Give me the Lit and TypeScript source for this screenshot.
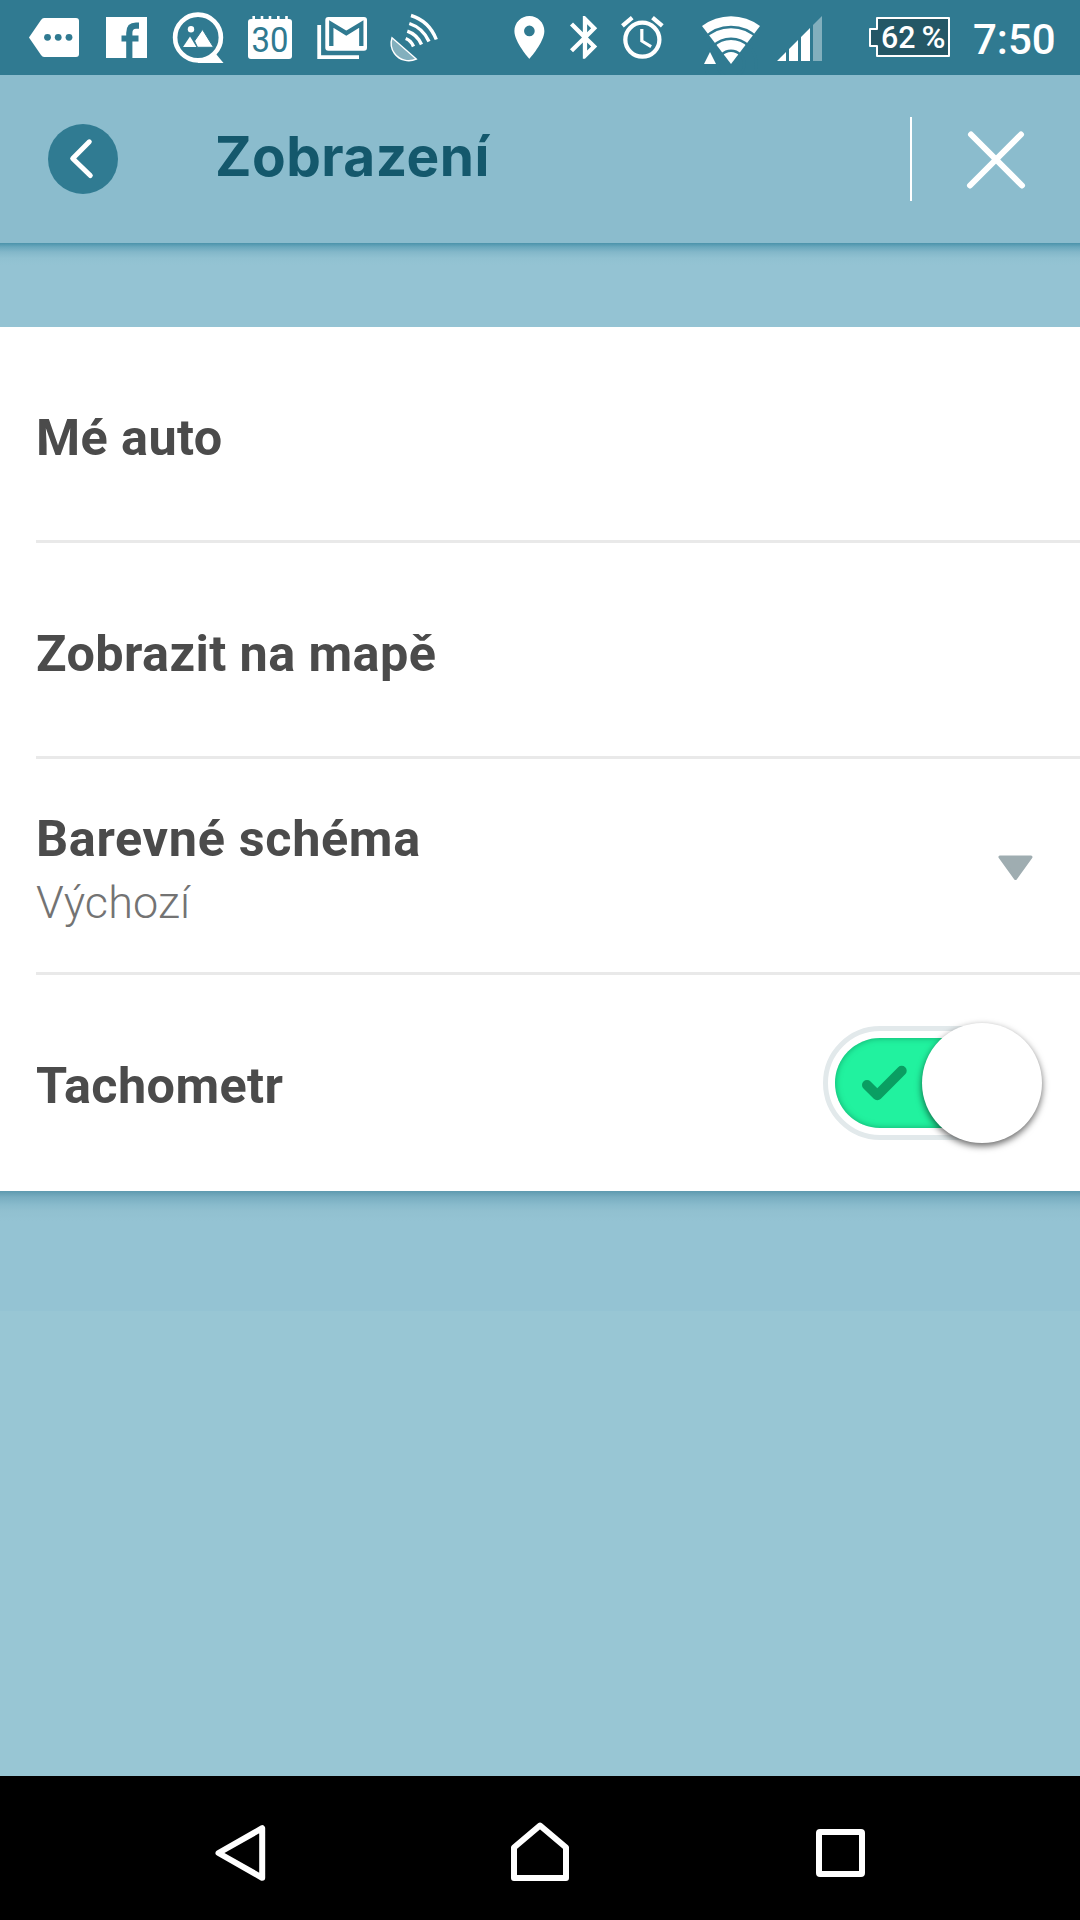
import { LitElement, html, css, svg, nothing } from "lit";
import { customElement, property } from "lit/decorators.js";

const TEAL = "#307a91";

/* Status icons: each slot spans [x, x + w] of the bar, slots are laid side by side. */
const leftIcons = [
  {
    x: 0, w: 92,
    art: svg`<path fill="#fff" d="M29 37.500 41 20Q42.400 18 44 18H76Q79 18 79 21V54Q79 57 76 57H44Q42.400 57 41 55Z"/>
      <g fill=${TEAL}><circle cx="47.500" cy="37.300" r="3.400"/><circle cx="58.200" cy="37.300" r="3.400"/><circle cx="69" cy="37.300" r="3.400"/></g>`,
  },
  {
    x: 92, w: 70,
    art: svg`<rect x="106" y="17" width="41" height="41" fill="#fff"/>
      <path fill="none" stroke=${TEAL} stroke-width="6.200" d="M129.300 58V33Q129.300 25.700 136 25.700H139M121.500 38.500H138.500"/>`,
  },
  {
    x: 162, w: 72,
    art: svg`<path fill="#fff" d="M198 57.500V63H223.500L216 54Z"/>
      <circle cx="198" cy="37.500" r="22.900" fill=${TEAL} stroke="#fff" stroke-width="4.600"/>
      <circle cx="191" cy="29.300" r="3.200" fill="#fff"/>
      <path fill="#fff" d="M183 47 190 36.500 196.500 47Z"/>
      <path fill="#fff" stroke=${TEAL} stroke-width="1" d="M194.500 41 202.500 29.500 213.500 47.300H197.500Z"/>`,
  },
  {
    x: 234, w: 72,
    art: svg`<rect x="248" y="19" width="44" height="40" rx="3" fill="#fff"/>
      <path stroke="#fff" stroke-width="2.600" d="M253.700 16V21M262 16V21M270 16V21M278.300 16V21M286.500 16V21"/>
      <text x="251.500" y="52" font-family="Roboto, sans-serif" font-size="35.500" font-weight="400" fill=${TEAL} textLength="37" lengthAdjust="spacingAndGlyphs">30</text>`,
  },
  {
    x: 306, w: 74,
    art: svg`<path fill="none" stroke="#fff" stroke-width="3.800" d="M319.200 25V57.100H359"/>
      <rect x="325.300" y="17" width="41.700" height="33.700" rx="3" fill="#fff"/>
      <path fill="none" stroke=${TEAL} stroke-width="4.300" d="M331.300 46V24L346.300 33.200 361.300 24V46"/>`,
  },
  {
    x: 380, w: 70,
    art: svg`<path fill="#fff" fill-opacity=".4" stroke="#fff" stroke-width="1.400" d="M392 37.700 416.300 59C409 62.500 399.500 60.500 394.500 53.500 390.500 48 390.500 42.500 392 37.700Z"/>
      <path fill="none" stroke="#fff" stroke-width="3.400" d="M411 15.500Q429 21 436.300 39.500M409.300 23.500Q423 28 429 41.500M407.300 31.200Q417 34.500 421.500 44.500M405.700 38.500Q411 40.500 413.500 46.500"/>`,
  },
];

const rightIcons = [
  {
    x: 500, w: 57,
    art: svg`<path fill="#fff" transform="translate(503.700 11.700) scale(2.140)" d="M12 2C8.130 2 5 5.130 5 9c0 5.250 7 13 7 13s7-7.750 7-13c0-3.870-3.130-7-7-7zm0 9.500a2.500 2.500 0 0 1 0-5 2.500 2.500 0 0 1 0 5z"/>`,
  },
  {
    x: 557, w: 53,
    art: svg`<path fill="#fff" transform="translate(559.300 11.700) scale(2.140)" d="M17.710 7.710 12 2h-1v7.590L6.410 5 5 6.410 10.590 12 5 17.590 6.410 19 11 14.410V22h1l5.710-5.710L13.410 12l4.300-4.290zM13 5.830l1.880 1.880L13 9.590V5.830zm1.880 10.460L13 18.170v-3.760l1.880 1.880z"/>`,
  },
  {
    x: 610, w: 75,
    art: svg`<path fill="#fff" transform="translate(616.800 12) scale(2.130)" d="m22 5.720-4.600-3.860-1.290 1.530 4.600 3.860L22 5.720zM7.880 3.390 6.600 1.860 2 5.710l1.290 1.530 4.590-3.850zM12.500 8H11v6l4.750 2.850.75-1.230-4-2.370V8zM12 4a9 9 0 1 0 0 18 9 9 0 0 0 0-18zm0 16a7 7 0 1 1 0-14 7 7 0 0 1 0 14z"/>`,
  },
  {
    x: 685, w: 83,
    art: svg`<path fill="#fff" d="M731 64 702 26A48 48 0 0 1 760 26Z"/>
      <g fill="none" stroke=${TEAL} stroke-width="2.600">
        <path d="M704 38.500A37.400 37.400 0 0 1 758 38.500"/><circle cx="731" cy="64" r="25.300"/><circle cx="731" cy="64" r="13.300"/>
      </g>
      <path fill="#fff" d="M710 52 716 64H704Z"/>`,
  },
  {
    x: 768, w: 82,
    art: svg`<path fill="#fff" d="M777 61 786 52V61ZM789 61V49L798 40V61ZM801 61V37L810 28V61Z"/>
      <path fill="#fff" fill-opacity=".4" d="M813 61V25L822 16V61Z"/>`,
  },
  {
    x: 850, w: 110,
    art: svg`<path fill="#245766" stroke="#fff" stroke-width="2" stroke-linejoin="round" d="M877 18H949V56H877V46H870V29H877Z"/>
      <text x="881" y="48" font-family="Roboto, sans-serif" font-size="31.500" font-weight="500" fill="#fff" textLength="34.500" lengthAdjust="spacingAndGlyphs">62</text>
      <text x="921.500" y="48" font-family="Roboto, sans-serif" font-size="31" font-weight="500" fill="#fff" textLength="24" lengthAdjust="spacingAndGlyphs">%</text>`,
  },
];

@customElement("status-bar")
class StatusBar extends LitElement {
  static styles = css`
    :host { display: flex; height: 75px; background: #307a91; justify-content: space-between; }
    .group { display: flex; }
    .icon { display: block; height: 75px; flex: none; }
    .time { width: 120px; box-sizing: border-box; padding-left: 13px; font: 500 42px/80px Roboto, sans-serif; color: #fff; white-space: nowrap; }
  `;
  private slotIcon(i: { x: number; w: number; art: unknown }) {
    return html`<svg class="icon" width=${i.w} height="75" viewBox="${i.x} 0 ${i.w} 75">${i.art}</svg>`;
  }
  render() {
    return html`
      <div class="group">${leftIcons.map((i) => this.slotIcon(i))}</div>
      <div class="group">${rightIcons.map((i) => this.slotIcon(i))}<div class="time">7:50</div></div>
    `;
  }
}

@customElement("toggle-switch")
class ToggleSwitch extends LitElement {
  static styles = css`
    :host { display: block; width: 219px; height: 120px; position: relative; }
    .track { position: absolute; left: 0; top: 3px; width: 210px; height: 114px; box-sizing: border-box; border: 5px solid #e2e9eb; border-radius: 57px; padding: 7px; background: #fff; }
    .fill { height: 90px; border-radius: 45px; background: #21f29f; box-shadow: inset 0 0 6px rgba(0, 110, 65, 0.55); box-sizing: border-box; padding: 27px 0 0 26px; }
    .check { display: block; }
    .knob { position: absolute; right: 0; top: 0; width: 120px; height: 120px; border-radius: 50%; background: #fff; box-shadow: 0 3px 7px rgba(0, 0, 0, 0.6); }
  `;
  render() {
    return html`
      <div class="track"><div class="fill">
        <svg class="check" width="48" height="36" viewBox="0 0 48 36">
          <path d="M6 20 16.300 30.200 40.700 5.700" fill="none" stroke="#0a9e62" stroke-width="10" stroke-linecap="round" stroke-linejoin="round"/>
        </svg>
      </div></div>
      <div class="knob"></div>
    `;
  }
}

@customElement("setting-row")
class SettingRow extends LitElement {
  @property() label = "";
  @property() value = "";
  static styles = css`
    :host { display: flex; height: 216px; box-sizing: border-box; margin-left: 36px; border-bottom: 3px solid #e9e9e9; justify-content: space-between; }
    :host(.last) { border-bottom-color: transparent; }
    .texts { padding-top: 81px; white-space: nowrap; }
    .texts.double { padding-top: 50px; }
    .label { font: 700 50.400px/60px Roboto, sans-serif; color: #4b4b4b; letter-spacing: var(--tracking, 0.400px); }
    .value { font: 300 45px/60px Roboto, sans-serif; color: #737373; padding-top: 4px; letter-spacing: 0.100px; }
  `;
  render() {
    return html`
      <div class="texts ${this.value ? "double" : ""}">
        <div class="label">${this.label}</div>
        ${this.value ? html`<div class="value">${this.value}</div>` : nothing}
      </div>
      <slot></slot>
    `;
  }
}

@customElement("app-root")
class AppRoot extends LitElement {
  static styles = css`
    :host { display: flex; flex-direction: column; width: 1080px; height: 1920px; overflow: hidden; background: #98c6d4; }
    .header { display: flex; align-items: center; height: 168px; background: #8bbccd; box-sizing: border-box; padding-left: 48px; }
    .back { display: block; flex: none; }
    .title { font: 700 55px/66px Inter, sans-serif; color: #14586c; margin: 0 0 6px 97px; letter-spacing: 0.450px; flex: 1; white-space: nowrap; }
    .divider { width: 2px; height: 84px; background: #fff; margin-right: 51px; }
    .close { display: block; margin-right: 52px; }
    .band { height: 84px; background: linear-gradient(#4b93ab 0, #6aa8bd 4px, #83b7c9 9px, #90c1d1 15px, #94c3d3 22px); }
    .list { background: #fff; height: 864px; }
    .rest { flex: 1; background: linear-gradient(#5e9aaf 0, #78adc0 6px, #89bbcc 14px, #91c0d0 20px, #94c3d3 30px, #94c3d3 120px, #98c6d4 120px); }
    .wide { --tracking: 0.650px; }
    .arrow { display: block; margin: 94px 44.500px 0 0; }
    .toggle { margin: 48px 38px 0 0; }
    .nav { display: flex; justify-content: space-between; align-items: center; height: 144px; background: #000; box-sizing: border-box; padding: 10px 209px 0 210px; }
    .key { display: block; }
  `;
  render() {
    return html`
      <status-bar></status-bar>
      <div class="header">
        <svg class="back" width="70" height="70" viewBox="0 0 70 70">
          <circle cx="35" cy="35" r="35" fill="#307b92"/>
          <path d="M41.300 17.800 24.700 34.500 42.300 51.500" fill="none" stroke="#fff" stroke-width="5" stroke-linecap="round" stroke-linejoin="round"/>
        </svg>
        <div class="title">Zobrazení</div>
        <div class="divider"></div>
        <svg class="close" width="65" height="65" viewBox="0 0 65 65">
          <path d="M8 7.500 59 58.500M58 7.500 7 58.500" stroke="#fff" stroke-width="6" stroke-linecap="round"/>
        </svg>
      </div>
      <div class="band"></div>
      <div class="list">
        <setting-row label="Mé auto"></setting-row>
        <setting-row label="Zobrazit na mapě"></setting-row>
        <setting-row class="wide" label="Barevné schéma" value="Výchozí">
          <svg class="arrow" width="41" height="32" viewBox="0 0 41 32">
            <path d="M5 4H36L20.500 25.500Z" fill="#9fadb1" stroke="#9fadb1" stroke-width="3" stroke-linejoin="round"/>
          </svg>
        </setting-row>
        <setting-row class="last" label="Tachometr"><toggle-switch class="toggle"></toggle-switch></setting-row>
      </div>
      <div class="rest"></div>
      <div class="nav">
        <svg class="key" width="60" height="60" viewBox="210 1823 60 60"><path d="M262.200 1828.200V1877.800L218.500 1853Z" fill="none" stroke="#fff" stroke-width="6" stroke-linejoin="round"/></svg>
        <svg class="key" width="65" height="64" viewBox="508 1821 65 64"><path d="M514 1878V1847.500L540 1825.500 566 1847.500V1878Z" fill="none" stroke="#fff" stroke-width="6" stroke-linejoin="round"/></svg>
        <svg class="key" width="60" height="60" viewBox="811 1823 60 60"><rect x="819" y="1832" width="43" height="42" rx="1" fill="none" stroke="#fff" stroke-width="6"/></svg>
      </div>
    `;
  }
}
